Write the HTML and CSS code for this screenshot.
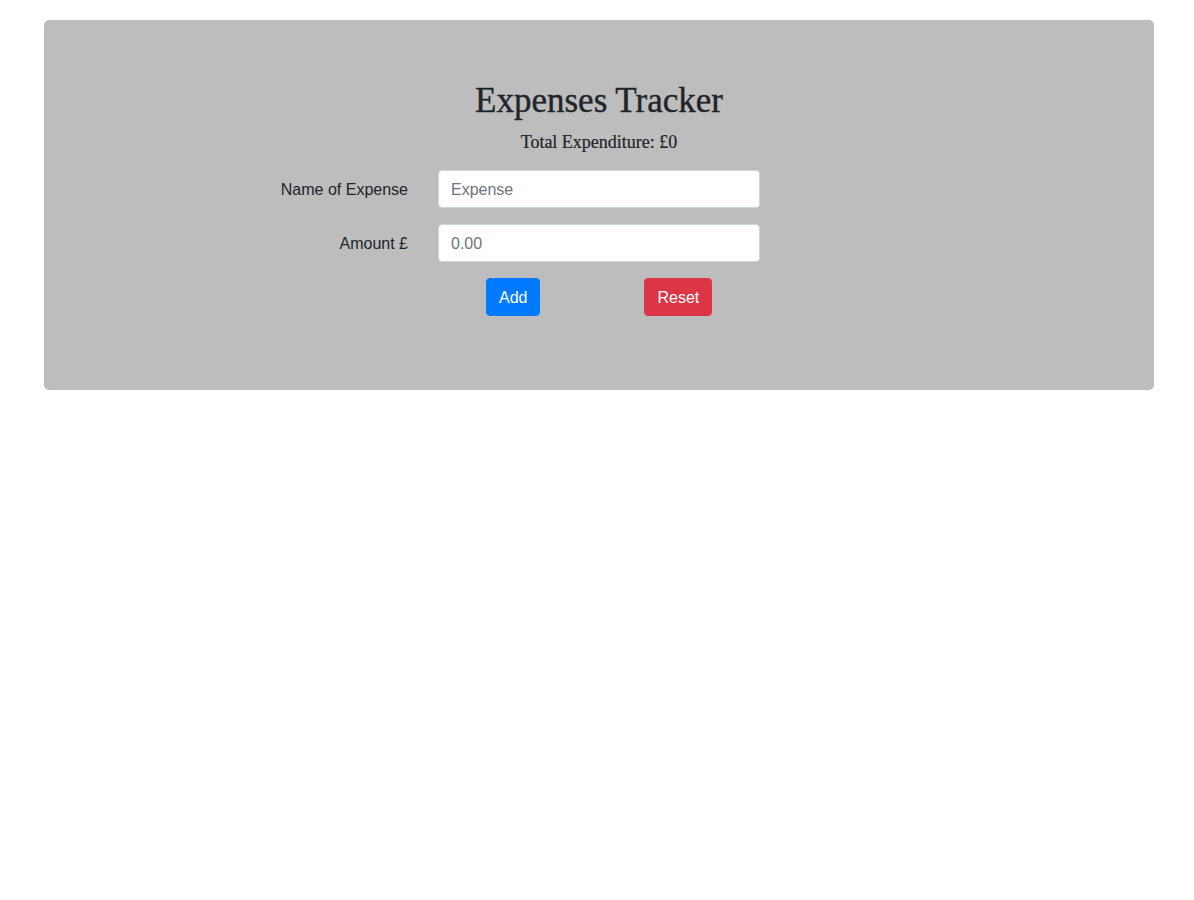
FILE: index.html
```html
<!DOCTYPE html>
<html lang="en">
<head>
<meta charset="utf-8">
<title>Expenses Tracker</title>
<link rel="stylesheet" href="styles.css">
</head>
<body>
<div class="box">
  <h1 class="title">Expenses Tracker</h1>
  <p class="total">Total Expenditure: £0</p>
  <form class="form">
    <label class="label" for="name">Name of Expense</label>
    <input class="input" id="name" type="text" placeholder="Expense">
    <label class="label" for="amount">Amount £</label>
    <input class="input" id="amount" type="text" placeholder="0.00">
    <div class="actions">
      <button type="button" class="btn btn-add">Add</button>
      <button type="button" class="btn btn-reset">Reset</button>
    </div>
  </form>
</div>
</body>
</html>
```

FILE: styles.css
```css
* { box-sizing: border-box; }
body {
  margin: 0;
  background: #ffffff;
  font-family: "Liberation Sans", Arial, sans-serif;
  color: #212529;
}
.box {
  margin: 20px 0 0 44px;
  width: 1110px;
  height: 370px;
  background: #bdbdbd;
  border-radius: 5px;
  padding-top: 57px;
}
.title {
  margin: 0;
  text-align: center;
  font-family: "Liberation Serif", "Times New Roman", serif;
  font-weight: 400;
  font-size: 35px;
  line-height: 48px;
  color: #212529;
  -webkit-text-stroke: 0.4px #212529;
}
.total {
  margin: 5px 0 0;
  text-align: center;
  font-family: "Liberation Serif", "Times New Roman", serif;
  font-size: 18px;
  line-height: 24px;
  color: #212529;
  -webkit-text-stroke: 0.2px #212529;
}
.form {
  margin-top: 16px;
  display: grid;
  grid-template-columns: 364px 322px;
  column-gap: 30px;
  row-gap: 16px;
  align-items: center;
}
.label {
  text-align: right;
  font-size: 16px;
  line-height: 24px;
  padding-top: 2px;
}
.input {
  height: 38px;
  width: 322px;
  border: 1px solid #ced4da;
  border-radius: 4px;
  padding: 7px 12px 5px;
  font-family: "Liberation Sans", Arial, sans-serif;
  font-size: 16px;
  color: #495057;
  background: #fff;
}
.input::placeholder { color: #6c757d; }
.actions {
  grid-column: 2;
  display: flex;
  gap: 104px;
  padding-left: 48px;
}
.btn {
  height: 38px;
  border: 1px solid transparent;
  border-radius: 4px;
  padding: 7px 12px 5px;
  font-family: "Liberation Sans", Arial, sans-serif;
  font-size: 16px;
  color: #fff;
}
.btn-add { background: #007bff; border-color: #007bff; }
.btn-reset { background: #dc3545; border-color: #dc3545; }
```
